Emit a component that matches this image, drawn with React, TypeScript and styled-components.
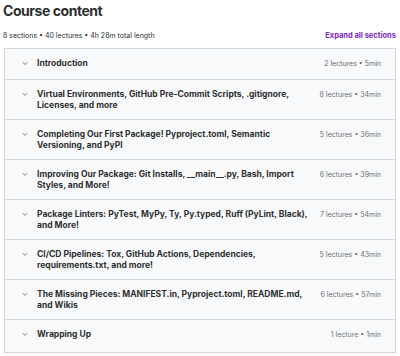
import { Fragment } from "react";
import styled, { createGlobalStyle } from "styled-components";

const GlobalStyle = createGlobalStyle`
  body {
    margin: 0;
    background: #ffffff;
    font-family: "Inter", "Liberation Sans", sans-serif;
    color: #2d2f31;
  }
`;

// titles are split where the original list wraps them
const sections = [
  { title: ["Introduction"], meta: "2 lectures • 5min" },
  { title: ["Virtual Environments, GitHub Pre-Commit Scripts, .gitignore,", "Licenses, and more"], meta: "8 lectures • 34min" },
  { title: ["Completing Our First Package! Pyproject.toml, Semantic", "Versioning, and PyPI"], meta: "5 lectures • 36min" },
  { title: ["Improving Our Package: Git Installs, __main__.py, Bash, Import", "Styles, and More!"], meta: "6 lectures • 39min" },
  { title: ["Package Linters: PyTest, MyPy, Ty, Py.typed, Ruff (PyLint, Black),", "and More!"], meta: "7 lectures • 54min" },
  { title: ["CI/CD Pipelines: Tox, GitHub Actions, Dependencies,", "requirements.txt, and more!"], meta: "5 lectures • 43min" },
  { title: ["The Missing Pieces: MANIFEST.in, Pyproject.toml, README.md,", "and Wikis"], meta: "6 lectures • 57min" },
  { title: ["Wrapping Up"], meta: "1 lecture • 1min" },
];

const Page = styled.div`
  width: 400px;
  box-sizing: border-box;
  padding: 1px 4px 0 3px;
`;

const Heading = styled.h2`
  margin: 0;
  font-size: 14px;
  font-weight: 700;
  line-height: 20px;
  letter-spacing: -0.45px;
`;

const SummaryBar = styled.div`
  display: flex;
  justify-content: space-between;
  align-items: center;
  margin-top: 10px;
  margin-bottom: 7px;
  font-size: 7px;
  line-height: 10px;
`;

const Summary = styled.span`
  color: #2d2f31;
`;

const ExpandAll = styled.button`
  border: none;
  background: none;
  padding: 0;
  font: inherit;
  font-size: 7.5px;
  font-weight: 700;
  color: #7d2ac8;
  cursor: pointer;
`;

const Panel = styled.div`
  margin-left: 1px;
  border: 1px solid #d1d7dc;
  border-bottom: none;
`;

const Row = styled.div<{ $last?: boolean }>`
  display: flex;
  align-items: flex-start;
  box-sizing: border-box;
  min-height: ${(p) => (p.$last ? 33 : 31)}px;
  padding: 9px 14px 8px 17px;
  background: #f7f9fa;
  border-bottom: 1px solid #d1d7dc;
`;

const Chevron = styled.svg`
  flex: none;
  width: 6px;
  height: 11px;
  margin-right: 9px;
  color: #6a6f73;
`;

const Title = styled.span`
  white-space: nowrap;
  font-size: 8.5px;
  font-weight: 700;
  line-height: 11px;
`;

const Meta = styled.span`
  margin-left: auto;
  padding-left: 12px;
  white-space: nowrap;
  font-size: 7px;
  line-height: 11px;
  color: #6a6f73;
`;

export default function App() {
  return (
    <>
      <GlobalStyle />
      <Page>
        <Heading>Course content</Heading>
        <SummaryBar>
          <Summary>8 sections • 40 lectures • 4h 28m total length</Summary>
          <ExpandAll>Expand all sections</ExpandAll>
        </SummaryBar>
        <Panel>
          {sections.map((s, i) => (
            <Row key={s.meta + i} $last={i === sections.length - 1}>
              <Chevron viewBox="0 0 6 11" fill="none">
                <path d="M1 4.5 L3 6.5 L5 4.5" stroke="currentColor" strokeWidth="0.9" strokeLinecap="round" strokeLinejoin="round" />
              </Chevron>
              <Title>
                {s.title.map((line, j) => (
                  <Fragment key={j}>
                    {j > 0 && <br />}
                    {line}
                  </Fragment>
                ))}
              </Title>
              <Meta>{s.meta}</Meta>
            </Row>
          ))}
        </Panel>
      </Page>
    </>
  );
}
